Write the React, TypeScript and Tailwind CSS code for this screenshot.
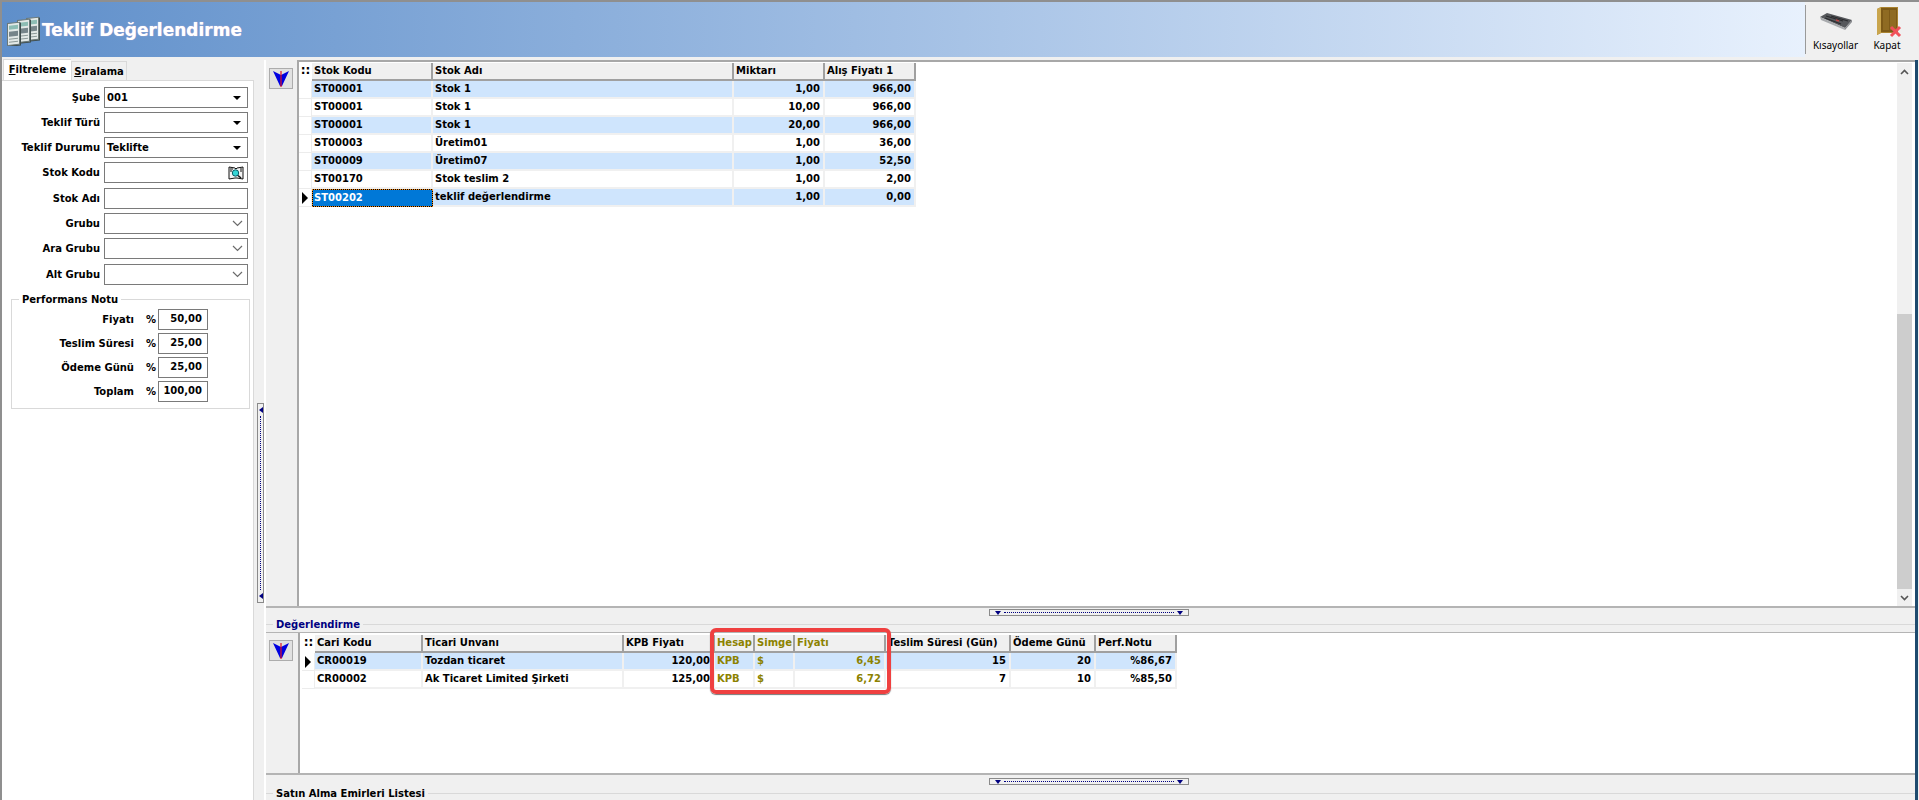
const topCols = [
  { title: 'Stok Kodu', w: 'w-[121px]', right: false },
  { title: 'Stok Adı', w: 'w-[301px]', right: false },
  { title: 'Miktarı', w: 'w-[91px]', right: true },
  { title: 'Alış Fiyatı 1', w: 'w-[91px]', right: true },
]

const topRows = [
  ['ST00001', 'Stok 1', '1,00', '966,00'],
  ['ST00001', 'Stok 1', '10,00', '966,00'],
  ['ST00001', 'Stok 1', '20,00', '966,00'],
  ['ST00003', 'Üretim01', '1,00', '36,00'],
  ['ST00009', 'Üretim07', '1,00', '52,50'],
  ['ST00170', 'Stok teslim 2', '1,00', '2,00'],
  ['ST00202', 'teklif değerlendirme', '1,00', '0,00'],
]

const evalCols = [
  { title: 'Cari Kodu', w: 'w-[108px]', right: false, olive: false },
  { title: 'Ticari Unvanı', w: 'w-[201px]', right: false, olive: false },
  { title: 'KPB Fiyatı', w: 'w-[91px]', right: true, olive: false },
  { title: 'Hesap', w: 'w-[40px]', right: false, olive: true },
  { title: 'Simge', w: 'w-[40px]', right: false, olive: true },
  { title: 'Fiyatı', w: 'w-[91px]', right: true, olive: true },
  { title: 'Teslim Süresi (Gün)', w: 'w-[125px]', right: true, olive: false },
  { title: 'Ödeme Günü', w: 'w-[85px]', right: true, olive: false },
  { title: 'Perf.Notu', w: 'w-[81px]', right: true, olive: false },
]

const evalRows = [
  ['CR00019', 'Tozdan ticaret', '120,00', 'KPB', '$', '6,45', '15', '20', '%86,67'],
  ['CR00002', 'Ak Ticaret Limited Şirketi', '125,00', 'KPB', '$', '6,72', '7', '10', '%85,50'],
]

const filters = [
  { label: 'Şube', value: '001', kind: 'solid', extra: '' },
  { label: 'Teklif Türü', value: '', kind: 'solid', extra: '' },
  { label: 'Teklif Durumu', value: 'Teklifte', kind: 'solid', extra: '' },
  { label: 'Stok Kodu', value: '', kind: 'search', extra: '' },
  { label: 'Stok Adı', value: '', kind: 'none', extra: 'mt-px' },
  { label: 'Grubu', value: '', kind: 'thin', extra: '' },
  { label: 'Ara Grubu', value: '', kind: 'thin', extra: '' },
  { label: 'Alt Grubu', value: '', kind: 'thin', extra: 'mt-px' },
]

const weights = [
  ['Fiyatı', '50,00'],
  ['Teslim Süresi', '25,00'],
  ['Ödeme Günü', '25,00'],
  ['Toplam', '100,00'],
]

function SheetsIcon() {
  return (
    <svg width="34" height="32" viewBox="0 0 34 32">
      {[[20, 4], [11, 6], [1, 9]].map(([x, y]) => (
        <g key={x} transform={`translate(${x} ${y}) skewY(-6)`}>
          <rect x="2" y="1" width="12" height="23" fill="#3f4d4d" />
          <rect x="0.5" y="0.5" width="12" height="22" fill="#e3e9e7" stroke="#6a7878" strokeWidth="1" />
          <rect x="2" y="3" width="9" height="4" fill="#8dbdb4" />
          <rect x="2" y="9" width="9" height="5" fill="#76858a" />
          <rect x="2" y="16" width="9" height="1" fill="#8b9897" />
          <rect x="2" y="19" width="9" height="1" fill="#8b9897" />
        </g>
      ))}
    </svg>
  )
}

function KeyboardIcon() {
  return (
    <svg width="34" height="20" viewBox="0 0 34 20">
      <path d="M1 5 L8 1 L33 8 L26 16 Z" fill="#56585c" />
      <path d="M1 5 L26 16 L26 18 L2 8 Z" fill="#a9abae" />
      <path d="M26 16 L33 8 L33 10 L26 18 Z" fill="#8a8c90" />
      <path d="M7 4 L24 9 M6 6 L22 12 M12 4 L29 9" stroke="#2a2b2e" strokeWidth="1.2" />
      <path d="M17 8 L20 9" stroke="#b44" strokeWidth="1.5" />
    </svg>
  )
}

function DoorIcon() {
  return (
    <svg width="26" height="32" viewBox="0 0 26 32">
      <path d="M1 3 L5 1 L22 1 L22 27 L5 27 L1 29 Z" fill="#a9822f" />
      <path d="M5 2 L21 2 L21 26 L5 26 Z" fill="#7d5a17" />
      <path d="M1 3 L5 1 L5 27 L1 29 Z" fill="#c9a54d" />
      <rect x="7" y="4" width="6" height="20" fill="#8f6b22" />
      <rect x="14" y="4" width="6" height="20" fill="#8f6b22" />
      <path d="M15 21 L24 30 M24 21 L15 30" stroke="#f0505a" strokeWidth="3" />
    </svg>
  )
}

function LookupIcon() {
  return (
    <svg width="16" height="14" viewBox="0 0 16 14">
      <path d="M1 1 L7 2 L8 3 L9 2 L15 1 L15 13 L9 12 L7 12 L1 13 Z" fill="#f4f4f4" stroke="#111" strokeWidth="1" />
      <path d="M2 3 L5 3 M2 5 L4 5 M12 3 L14 3 M12 5 L14 5" stroke="#111" strokeWidth="1" />
      <circle cx="7.5" cy="7" r="3.2" fill="#35d6d6" stroke="#0b5a66" strokeWidth="1" />
      <path d="M10 9.5 L13 12" stroke="#111" strokeWidth="1.6" />
    </svg>
  )
}

function SolidArrow() {
  return <div className="mr-[6px] h-0 w-0 border-x-[4px] border-t-[4px] border-x-transparent border-t-black" />
}

function ThinArrow() {
  return (
    <svg className="mr-[4px]" width="11" height="7" viewBox="0 0 11 7">
      <path d="M1 1 L5.5 5.5 L10 1" fill="none" stroke="#6b6b6b" strokeWidth="1.2" />
    </svg>
  )
}

function SortButton() {
  return (
    <div className="flex h-[21px] w-[24px] items-center justify-center border border-[#acacac] bg-[#e1e1e1]">
      <svg width="16" height="17" viewBox="0 0 16 17">
        <path d="M0 1 L8 5 L16 1 L9 16 L7 16 Z" fill="#0000e0" />
        <path d="M8 1 L8 17" stroke="#e01020" strokeWidth="1.2" />
      </svg>
    </div>
  )
}

function Indicator({ header, active }: { header?: boolean; active?: boolean }) {
  return (
    <div
      className={`flex h-[18px] w-[13px] shrink-0 items-center justify-center ${
        header ? 'text-[12px]' : 'border-b border-r border-[#ececec]'
      }`}
    >
      {header && <span className="relative -top-[2px]">::</span>}
      {active && <div className="h-0 w-0 border-y-[6px] border-l-[6px] border-y-transparent border-l-black" />}
    </div>
  )
}

function HeaderCell({ title, w, olive }: { title: string; w: string; olive?: boolean }) {
  return (
    <div
      className={`h-[18px] shrink-0 truncate border-b-2 border-r-2 border-b-[#a0a0a0] border-r-[#a0a0a0] bg-[#f0f0f0] pl-[2px] leading-[15px] ${w} ${
        olive ? 'text-[#8c8200]' : 'text-black'
      }`}
    >
      {title}
    </div>
  )
}

function Cell({ text, w, right, olive, selected, striped }: {
  text: string; w: string; right?: boolean; olive?: boolean; selected?: boolean; striped?: boolean
}) {
  if (selected) {
    return (
      <div className={`h-[18px] shrink-0 whitespace-nowrap border border-black bg-[#0078d7] pl-px leading-[15px] text-white outline-1 -outline-offset-1 outline-dotted outline-[#f08a1c] ${w}`}>
        {text}
      </div>
    )
  }
  return (
    <div
      className={`h-[18px] shrink-0 whitespace-nowrap border-b-2 border-r-2 border-[#f0f0f0] leading-[16px] ${w} ${
        right ? 'pr-[3px] text-right' : 'pl-[2px]'
      } ${striped ? 'bg-[#cfe5fd]' : 'bg-white'} ${olive ? 'text-[#8c8200]' : 'text-black'}`}
    >
      {text}
    </div>
  )
}

function Splitter() {
  return (
    <div className="mx-auto flex h-[7px] w-[200px] items-center justify-between border border-[#8a8a8a] bg-[#f0f0f0] px-[5px]">
      <div className="h-0 w-0 border-x-[3px] border-t-[4px] border-x-transparent border-t-[#000080]" />
      <div className="mx-[3px] h-0 flex-1 border-t border-dotted border-[#000080]" />
      <div className="h-0 w-0 border-x-[3px] border-t-[4px] border-x-transparent border-t-[#000080]" />
    </div>
  )
}

function FilterPanel() {
  return (
    <div className="flex w-[252px] shrink-0 flex-col bg-white">
      <div className="flex h-[20px] items-end bg-[#f0f0f0] pl-px">
        <div className="flex h-[21px] w-[68px] items-center justify-center border-l border-t border-[#d9d9d9] bg-white pb-[2px]">
          <span><span className="underline">F</span>iltreleme</span>
        </div>
        <div className="flex h-[19px] w-[56px] items-center justify-center border border-b-0 border-[#d9d9d9] bg-[#f0f0f0]">
          <span><span className="underline">S</span>ıralama</span>
        </div>
      </div>
      <div className="flex-1 border-r border-t border-[#d9d9d9] pt-[6px]">
        <div className="flex flex-col gap-[4px]">
          {filters.map((f) => (
            <div key={f.label} className={`flex h-[21px] items-center ${f.extra}`}>
              <div className="w-[98px] shrink-0 text-right">{f.label}</div>
              <div className="ml-[4px] flex h-[21px] w-[144px] items-center justify-between border border-[#7a7a7a] bg-white pl-[2px]">
                <span>{f.value}</span>
                {f.kind === 'solid' && <SolidArrow />}
                {f.kind === 'thin' && <ThinArrow />}
                {f.kind === 'search' && <div className="mr-[3px]"><LookupIcon /></div>}
              </div>
            </div>
          ))}
        </div>
        <div className="relative ml-[9px] mt-[14px] h-[110px] w-[239px] border border-[#d9d9d9] pl-[1px] pt-[9px]">
          <span className="absolute -top-[8px] left-[7px] bg-white px-[3px]">Performans Notu</span>
          <div className="flex flex-col gap-[3px]">
            {weights.map(([label, value]) => (
              <div key={label} className="flex h-[21px] items-center">
                <div className="w-[121px] shrink-0 text-right">{label}</div>
                <div className="w-[24px] shrink-0 pr-[2px] text-right">%</div>
                <div className="h-[21px] w-[50px] border border-[#7a7a7a] bg-white pr-[5px] text-right leading-[18px]">{value}</div>
              </div>
            ))}
          </div>
        </div>
      </div>
    </div>
  )
}

function StockGrid() {
  return (
    <div className="flex min-h-0 flex-1 border-b-2 border-[#b4b4b4]">
      <div className="w-[31px] shrink-0 bg-[#f0f0f0] pl-[3px] pt-[8px]">
        <SortButton />
      </div>
      <div className="flex flex-1 border-l-2 border-t-2 border-[#a8a8a8] bg-white">
        <div className="flex-1 pt-px">
          <div className="flex">
            <Indicator header />
            {topCols.map((c) => <HeaderCell key={c.title} title={c.title} w={c.w} />)}
          </div>
          {topRows.map((row, i) => (
            <div key={i} className="flex">
              <Indicator active={i === 6} />
              {row.map((v, j) => (
                <Cell
                  key={j}
                  text={v}
                  w={topCols[j].w}
                  right={topCols[j].right}
                  selected={i === 6 && j === 0}
                  striped={i % 2 === 0}
                />
              ))}
            </div>
          ))}
        </div>
        <div className="mr-[3px] mt-px flex w-[15px] flex-col bg-[#f0f0f0]">
          <div className="flex h-[17px] items-center justify-center">
            <svg width="9" height="6" viewBox="0 0 9 6"><path d="M1 5 L4.5 1.5 L8 5" fill="none" stroke="#555" strokeWidth="1.6" /></svg>
          </div>
          <div className="h-[234px]" />
          <div className="min-h-0 flex-1 bg-[#cdcdcd]" />
          <div className="flex h-[17px] items-center justify-center">
            <svg width="9" height="6" viewBox="0 0 9 6"><path d="M1 1 L4.5 4.5 L8 1" fill="none" stroke="#555" strokeWidth="1.6" /></svg>
          </div>
        </div>
      </div>
    </div>
  )
}

function EvaluationGrid() {
  return (
    <div className="flex h-[143px] border-b-2 border-t border-[#b4b4b4]">
      <div className="w-[32px] shrink-0 bg-[#f0f0f0] pl-[3px] pt-[7px]">
        <SortButton />
      </div>
      <div className="relative flex-1 border-l-2 border-[#a8a8a8] bg-white pl-[2px] pt-[2px]">
        <div className="flex">
          <Indicator header />
          {evalCols.map((c) => <HeaderCell key={c.title} title={c.title} w={c.w} olive={c.olive} />)}
        </div>
        {evalRows.map((row, i) => (
          <div key={i} className="flex">
            <Indicator active={i === 0} />
            {row.map((v, j) => (
              <Cell key={j} text={v} w={evalCols[j].w} right={evalCols[j].right} olive={evalCols[j].olive} striped={i === 0} />
            ))}
          </div>
        ))}
        {/* red marker drawn over the grid */}
        <div className="absolute left-[410px] top-[-5px] h-[66px] w-[181px] rounded-[6px] border-4 border-[#ef4040] shadow-[0_1px_1px_#777]" />
      </div>
    </div>
  )
}

export default function App() {
  return (
    <div className="flex h-[800px] w-[1919px] flex-col overflow-hidden border-l-2 border-t-2 border-[#8f8f8f] bg-[#f0f0f0] font-['DejaVu_Sans',sans-serif] text-[10px] font-bold text-black">
      {/* Header */}
      <header className="flex h-[55px] shrink-0">
        <div className="flex flex-1 items-center bg-gradient-to-r from-[#5f8fca] to-[#e8f1fd] pl-[4px]">
          <SheetsIcon />
          <span className="ml-[2px] mt-[3px] text-[17px] text-white [text-shadow:0_0_1px_#f4c8e0]">Teklif Değerlendirme</span>
        </div>
        <div className="flex w-[114px] shrink-0 bg-[#f0f0f0] py-[3px]">
          <div className="w-px bg-[#9a9a9a]" />
          <div className="flex flex-1 flex-col items-center pr-[4px] font-['Noto_Sans',sans-serif] text-[10px] font-normal">
            <div className="flex h-[33px] items-center"><KeyboardIcon /></div>
            <span className="leading-[15px]">Kısayollar</span>
          </div>
          <div className="flex w-[50px] flex-col items-center pr-[14px] font-['Noto_Sans',sans-serif] text-[10px] font-normal">
            <div className="flex h-[33px] items-center pl-[4px]"><DoorIcon /></div>
            <span className="leading-[15px]">Kapat</span>
          </div>
        </div>
      </header>

      {/* Main */}
      <main className="mt-[3px] flex min-h-0 flex-1">
        <FilterPanel />

        {/* vertical splitter */}
        <div className="flex w-[12px] shrink-0 items-center border-r-2 border-white pl-[3px]">
          <div className="relative mt-[145px] flex h-[200px] w-[7px] flex-col items-center justify-between border border-[#8a8a8a] bg-[#f0f0f0] py-[3px]">
            <div className="h-0 w-0 border-y-[3px] border-r-[4px] border-y-transparent border-r-[#000080]" />
            <div className="my-[3px] w-0 flex-1 border-l border-dotted border-[#000080]" />
            <div className="h-0 w-0 border-y-[3px] border-r-[4px] border-y-transparent border-r-[#000080]" />
          </div>
        </div>

        <div className="mr-px flex min-w-0 flex-1 flex-col border-r-[3px] border-[#1e4a6e]">
          <StockGrid />
          <div className="h-[192px] shrink-0">
            <div className="h-[7px] pr-[4px] pt-px">
              <Splitter />
            </div>
            <div className="relative mt-[9px] h-[8px] border-t border-[#d9d9d9]">
              <span className="absolute -top-[8px] left-[7px] bg-[#f0f0f0] px-[3px] text-[#000080]">Değerlendirme</span>
            </div>
            <EvaluationGrid />
            <div className="h-[7px] pr-[4px] pt-[3px]">
              <Splitter />
            </div>
            <div className="relative mt-[11px] h-[7px] border-t border-[#d9d9d9]">
              <span className="absolute -top-[8px] left-[7px] bg-[#f0f0f0] px-[3px]">Satın Alma Emirleri Listesi</span>
            </div>
          </div>
        </div>
      </main>
    </div>
  )
}
